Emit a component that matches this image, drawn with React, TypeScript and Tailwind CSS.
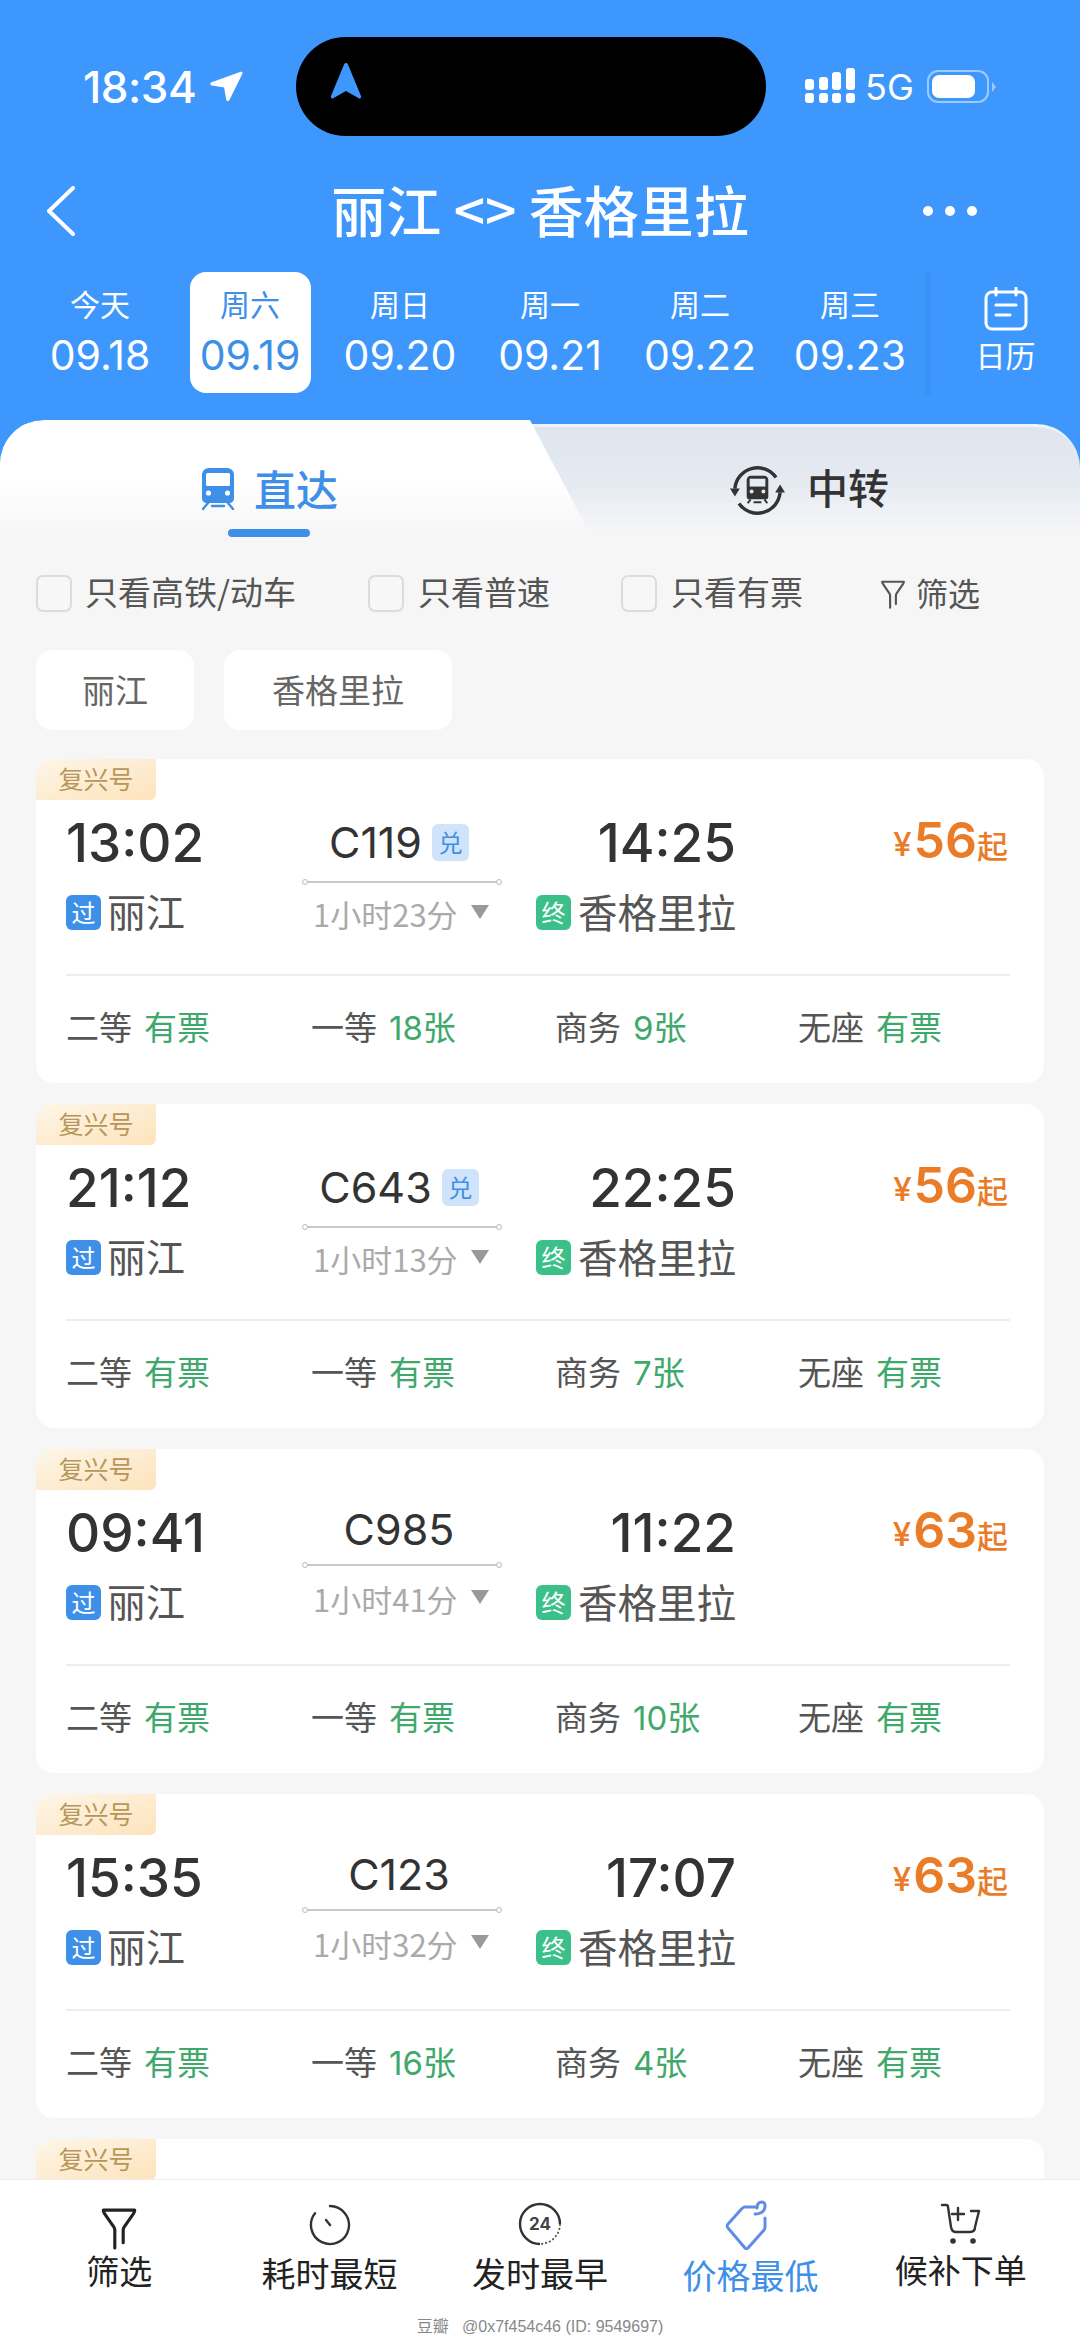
const cjk = 'font-["Noto_Sans_CJK_SC",sans-serif]'
const num = 'font-["Inter","Noto_Sans_CJK_SC",sans-serif]'

const dates = [
  { week: '今天', date: '09.18' },
  { week: '周六', date: '09.19', active: true },
  { week: '周日', date: '09.20' },
  { week: '周一', date: '09.21' },
  { week: '周二', date: '09.22' },
  { week: '周三', date: '09.23' },
]

const trains = [
  { dep: '13:02', no: 'C119', badge: true, arr: '14:25', dur: '1小时23分', price: '56', seats: ['有票', '18张', '9张', '有票'] },
  { dep: '21:12', no: 'C643', badge: true, arr: '22:25', dur: '1小时13分', price: '56', seats: ['有票', '有票', '7张', '有票'] },
  { dep: '09:41', no: 'C985', badge: false, arr: '11:22', dur: '1小时41分', price: '63', seats: ['有票', '有票', '10张', '有票'] },
  { dep: '15:35', no: 'C123', badge: false, arr: '17:07', dur: '1小时32分', price: '63', seats: ['有票', '16张', '4张', '有票'] },
]

const seatNames = ['二等', '一等', '商务', '无座']

function Funnel({ className }: { className: string }) {
  return (
    <svg viewBox="0 0 36 42" fill="none" stroke="currentColor" strokeWidth="3" strokeLinecap="round" strokeLinejoin="round" className={className}>
      <path d="M3 4h30M3 4c0 1 .5 2 1 3l9 13c.6.9 1 1.600 1 3v17M33 4c0 1-.5 2-1 3l-9 13c-.6.9-1 1.600-1 3v12" />
    </svg>
  )
}

function TrainGlyph({ className, fill, hole }: { className: string; fill: string; hole: string }) {
  return (
    <svg viewBox="0 0 36 42" className={className}>
      <path d="M9 0h18c4 0 7 3 7 7v23c0 3-2 5-5 5H7c-3 0-5-2-5-5V7c0-4 3-7 7-7z" fill={fill} />
      <rect x="6" y="5" width="24" height="13" rx="1.500" fill={hole} />
      <circle cx="8.500" cy="25" r="2.600" fill={hole} />
      <circle cx="27.500" cy="25" r="2.600" fill={hole} />
      <path d="M8 35l-5 6M28 35l5 6M12 38h12" stroke={fill} strokeWidth="2.400" strokeLinecap="round" fill="none" />
    </svg>
  )
}

function Tag() {
  return (
    <div className={`${cjk} w-[120px] h-[41px] rounded-br-[6px] bg-gradient-to-br from-[#fdf6e8] to-[#fde3bb] text-[#b8965a] text-[25px] leading-[38px] text-center`}>
      复兴号
    </div>
  )
}

function Card({ t }: { t: (typeof trains)[number] }) {
  return (
    <div className="bg-white rounded-[18px] h-[324px] overflow-hidden">
      <Tag />
      <div className="grid grid-cols-[236px_200px_234px_1fr] pl-[30px] pr-[36px]">
        <div className={`${num} h-[83px] pt-[10px] text-[53px] leading-[66px] font-medium text-[#333]`}>{t.dep}</div>
        <div className="h-[83px] flex flex-col">
          <div className="flex-1 flex items-center justify-center gap-[10px] pt-[4px] pr-[6px]">
            <span className={`${num} text-[43px] leading-none text-[#333]`}>{t.no}</span>
            {t.badge && (
              <span className={`${cjk} w-[37px] h-[37px] rounded-[6px] bg-[#cfe3fa] text-[#3d8fe8] text-[24px] leading-[35px] text-center`}>兑</span>
            )}
          </div>
          <div className={`relative h-[2px] bg-[#c9c9c9] mx-[2px] ${t.badge ? '' : 'mb-[7px]'}`}>
            <span className="absolute -left-[2px] -top-[2px] w-[6px] h-[6px] rounded-full border border-[#bbb] bg-white" />
            <span className="absolute -right-[2px] -top-[2px] w-[6px] h-[6px] rounded-full border border-[#bbb] bg-white" />
          </div>
        </div>
        <div className={`${num} h-[83px] pt-[10px] text-[53px] leading-[66px] font-medium text-[#333] text-right`}>{t.arr}</div>
        <div className="h-[83px] flex items-end justify-end text-[#ea7c28] pb-[21px]">
          <span className={`${num} text-[33px] leading-[36px] font-medium mr-[2px]`}>¥</span>
          <span className={`${num} text-[50px] leading-[54px] font-semibold -mb-[5px]`}>{t.price}</span>
          <span className={`${cjk} text-[31px] leading-[34px] font-medium`}>起</span>
        </div>

        <div className="h-[62px] flex items-center gap-[6px] pb-[3px]">
          <span className={`${cjk} w-[35px] h-[35px] rounded-[6px] bg-[#3d8fe8] text-white text-[24px] leading-[33px] text-center`}>过</span>
          <span className={`${cjk} text-[39px] leading-none text-[#555] -mt-[4px]`}>丽江</span>
        </div>
        <div className={`h-[62px] flex items-center pl-[11px] gap-[12px] ${t.badge ? 'pb-[2px]' : 'pb-[11px]'}`}>
          <span className={`${cjk} text-[31px] leading-none text-[#aaa] whitespace-nowrap`}>{t.dur}</span>
          <svg viewBox="0 0 20 15" className="w-[20px] h-[15px] -mt-[4px]">
            <path d="M1 1h18l-9 14z" fill="#999" />
          </svg>
        </div>
        <div className="h-[62px] flex items-center justify-end gap-[7px] pb-[3px]">
          <span className={`${cjk} w-[35px] h-[35px] rounded-[6px] bg-[#3cc08a] text-white text-[24px] leading-[33px] text-center`}>终</span>
          <span className={`${cjk} text-[39.500px] leading-none text-[#555] whitespace-nowrap -mt-[4px]`}>香格里拉</span>
        </div>
        <div />
      </div>
      <div className="h-[2px] bg-[#eeeeee] ml-[30px] mr-[34px] mt-[29px]" />
      <div className="grid grid-cols-[245px_244px_243px_1fr] pl-[30px] h-[108px] items-center pb-[3px]">
        {t.seats.map((s, i) => (
          <div key={i} className={`${num} text-[33px] leading-none flex gap-[12px] whitespace-nowrap`}>
            <span className="text-[#555]">{seatNames[i]}</span>
            <span className="text-[#3fa96b]">{s}</span>
          </div>
        ))}
      </div>
    </div>
  )
}

export default function App() {
  return (
    <div className={`relative w-[1080px] h-[2348px] overflow-hidden bg-[#f6f6f7] ${cjk}`}>
      {/* 顶部蓝色区域 */}
      <div className="bg-[#3d97fd] text-white h-[420px] pt-[37px]">
        <div className="h-[99px] flex items-center pl-[83px]">
          <span className="w-[112px] font-['Inter',sans-serif] font-medium text-[44px] leading-none whitespace-nowrap tracking-[-0.5px]">18:34</span>
          <svg viewBox="0 0 34 32" className="w-[33px] h-[31px] ml-[15px]">
            <path d="M31 1c2-.8 3 .4 2.300 2L20 30c-.8 1.800-3 1.500-3.300-.5L14.500 17 2 15c-2-.3-2.300-2.600-.4-3.400z" fill="#fff" />
          </svg>
          <div className="ml-[53px] w-[470px] h-[99px] rounded-[50px] bg-black flex items-center pl-[34px]">
            <svg viewBox="0 0 32 38" className="w-[32px] h-[38px] -mt-[12px]">
              <path d="M16 1c1 0 1.600.6 2 1.600L31 34c.6 1.600-.6 3-2.200 2.200L16 29 3.200 36.200C1.600 37 .4 35.600 1 34L14 2.600C14.400 1.600 15 1 16 1z" fill="#3d97fd" />
            </svg>
          </div>
          <div className="ml-[39px] grid grid-cols-4 gap-x-[4.500px] items-end w-[50px] -mt-[3px]">
            <span className="h-[11px] bg-white rounded-[3px]" />
            <span className="h-[13px] bg-white rounded-[3px]" />
            <span className="h-[18px] bg-white rounded-[3px]" />
            <span className="h-[22px] bg-white rounded-[3px]" />
            <span className="h-[10px] bg-white rounded-[3px] mt-[3px]" />
            <span className="h-[10px] bg-white rounded-[3px] mt-[3px]" />
            <span className="h-[10px] bg-white rounded-[3px] mt-[3px]" />
            <span className="h-[10px] bg-white rounded-[3px] mt-[3px]" />
          </div>
          <span className="ml-[10px] w-[49px] font-['Inter',sans-serif] text-[36px] leading-none">5G</span>
          <div className="ml-[13px] w-[62px] h-[33px] rounded-[11px] border-[2px] border-white/50 p-[3px] -mt-[1px]">
            <div className="w-[43px] h-full rounded-[7px] bg-white" />
          </div>
          <span className="ml-[3px] w-0 h-0 border-y-[5px] border-y-transparent border-l-[4px] border-l-white/50" />
        </div>

        <div className="h-[136px] pt-[8px] grid grid-cols-[1fr_auto_1fr] items-center">
          <div className="pl-[45px] pt-[6px]">
            <svg viewBox="0 0 30 50" fill="none" stroke="#fff" strokeWidth="4" strokeLinecap="round" strokeLinejoin="round" className="w-[30px] h-[50px]">
              <path d="M28 2L4 25l24 23" />
            </svg>
          </div>
          <div className="text-[55px] leading-none font-medium whitespace-nowrap">丽江 &lt;&gt; 香格里拉</div>
          <div className="flex justify-end gap-[12px] pr-[103px] pt-[6px]">
            <span className="w-[10px] h-[10px] rounded-full bg-white" />
            <span className="w-[10px] h-[10px] rounded-full bg-white" />
            <span className="w-[10px] h-[10px] rounded-full bg-white" />
          </div>
        </div>

        <div className="flex pl-[25px]">
          {dates.map((d) => (
            <div key={d.date} className="w-[150px] flex justify-center">
              <div className={`w-[121px] h-[121px] rounded-[16px] pt-[11px] flex flex-col items-center ${d.active ? 'bg-white text-[#3d8fe8]' : ''}`}>
                <span className="text-[30px] leading-[40px]">{d.week}</span>
                <span className={`${num} mt-[10px] text-[41px] leading-[44px] whitespace-nowrap`}>{d.date}</span>
              </div>
            </div>
          ))}
          <div className="flex-1 h-[125px] flex flex-col items-center pt-[15px] border-l-[6px] border-[#3b93f8]">
            <svg viewBox="0 0 44 44" fill="none" stroke="#fff" strokeWidth="3" strokeLinecap="round" className="w-[44px] h-[44px]">
              <rect x="2" y="5" width="40" height="37" rx="6" />
              <path d="M12 1v7M32 1v7M12 18h20M12 28h14" />
            </svg>
            <span className="mt-[3px] text-[30px] leading-[40px]">日历</span>
          </div>
        </div>
      </div>

      {/* 直达 / 中转 */}
      <div className="bg-[#3d97fd]">
        <div className="relative h-[125px] rounded-tr-[44px] rounded-tl-[44px] overflow-hidden flex">
          <div className="absolute inset-x-0 top-[4px] bottom-0 rounded-tr-[44px] border-t-[3px] border-[#eef3fa] bg-gradient-to-b from-[#dfe5ee] via-[#e6ebf2] via-50% to-[#f6f6f7] to-90%" />
          <div className="relative w-[596px] h-full rounded-tl-[44px] bg-gradient-to-b from-white from-50% to-[#f6f6f7] to-90% [clip-path:polygon(0_0,530px_0,596px_100%,0_100%)] flex flex-col items-center pt-[44px] pr-[58px]">
            <div className="flex items-center gap-[18px] h-[50px]">
              <TrainGlyph className="w-[36px] h-[42px]" fill="#3d8fe8" hole="#ffffff" />
              <span className="text-[42px] leading-none text-[#3d8fe8] font-medium -mt-[2px]">直达</span>
            </div>
            <span className="mt-[15px] w-[82px] h-[8px] rounded-full bg-[#3d8fe8]" />
          </div>
          <div className="relative flex-1 flex items-start pl-[134px] pt-[43px] gap-[22px]">
            <svg viewBox="0 0 56 56" fill="none" className="w-[55px] h-[55px]">
              <path d="M46.800 14.800A23 23 0 0 0 5 26M9.200 41.200A23 23 0 0 0 51 30" stroke="#333" strokeWidth="3.500" />
              <path d="M0 26h10l-5 8zM46 30h10l-5-8z" fill="#333" />
              <g transform="translate(17 13)">
                <path d="M4 0h14c2 0 4 2 4 4v17c0 2-1 3-3 3H3c-2 0-3-1-3-3V4c0-2 2-4 4-4z" fill="#333" />
                <rect x="3" y="3" width="16" height="8" fill="#e6eaf1" />
                <circle cx="5" cy="16" r="2" fill="#e6eaf1" />
                <circle cx="17" cy="16" r="2" fill="#e6eaf1" />
                <path d="M4 24l-3 4M18 24l3 4M7 27h8" stroke="#333" strokeWidth="2" />
              </g>
            </svg>
            <span className="text-[41px] leading-[46px] text-[#333] font-medium">中转</span>
          </div>
        </div>
      </div>

      {/* 筛选 */}
      <div className="flex items-center h-[37px] mt-[30px] pl-[36px] text-[33px] text-[#555]">
        <span className="w-[36px] h-[37px] rounded-[7px] border-2 border-[#dcdcdc] bg-[#f7f7f7]" />
        <span className="ml-[13px] w-[283px] leading-none whitespace-nowrap pb-[4px]">只看高铁/动车</span>
        <span className="w-[36px] h-[37px] rounded-[7px] border-2 border-[#dcdcdc] bg-[#f7f7f7]" />
        <span className="ml-[14px] w-[203px] leading-none whitespace-nowrap pb-[4px]">只看普速</span>
        <span className="w-[36px] h-[37px] rounded-[7px] border-2 border-[#dcdcdc] bg-[#f7f7f7]" />
        <span className="ml-[14px] w-[209px] leading-none whitespace-nowrap pb-[4px]">只看有票</span>
        <Funnel className="w-[26px] h-[32px]" />
        <span className="ml-[10px] text-[32px] leading-none pb-[4px]">筛选</span>
      </div>

      <div className="flex gap-[30px] pl-[36px] mt-[38px] text-[33px] text-[#666]">
        <div className="w-[158px] h-[80px] rounded-[16px] bg-white flex items-center justify-center">丽江</div>
        <div className="w-[228px] h-[80px] rounded-[16px] bg-white flex items-center justify-center">香格里拉</div>
      </div>

      {/* 车次列表 */}
      <div className="flex flex-col gap-[21px] mx-[36px] mt-[29px]">
        {trains.map((t) => (
          <Card key={t.no} t={t} />
        ))}
        <div className="bg-white rounded-[18px] h-[324px] overflow-hidden">
          <Tag />
        </div>
      </div>

      {/* 底部操作栏 */}
      <div className="absolute left-0 right-0 bottom-0 h-[169px] bg-white border-t border-[#ececec] px-[14px]">
        <div className="grid grid-cols-5 text-[#222]">
          <div className="flex flex-col items-center pt-[26px]">
            <Funnel className="w-[38px] h-[44px]" />
            <span className="text-[33px] leading-[40px]">筛选</span>
          </div>
          <div className="flex flex-col items-center pt-[24px]">
            <svg viewBox="0 0 42 42" fill="none" stroke="#333" strokeWidth="2.400" strokeLinecap="round" className="w-[42px] h-[42px]">
              <path d="M21 2a19 19 0 1 1-15 7.300" />
              <path d="M17 16l4 5" />
            </svg>
            <span className="text-[34px] leading-[42px] mt-[6px]">耗时最短</span>
          </div>
          <div className="flex flex-col items-center pt-[22px]">
            <svg viewBox="0 0 44 44" fill="none" className="w-[44px] h-[44px]">
              <path d="M42 22a20 20 0 0 1-20 20" stroke="#555" strokeWidth="1.800" strokeDasharray="2 2" />
              <path d="M22 42a20 20 0 0 1 0-40" stroke="#333" strokeWidth="2.400" />
              <path d="M22 2a20 20 0 0 1 20 20" stroke="#333" strokeWidth="2.400" />
              <text x="22" y="28" textAnchor="middle" fontSize="17" fontWeight="700" fontFamily="Inter, sans-serif" fill="#444">24</text>
            </svg>
            <span className="text-[34px] leading-[42px] mt-[6px]">发时最早</span>
          </div>
          <div className="flex flex-col items-center pt-[20px]">
            <svg viewBox="0 0 50 50" fill="none" stroke="#5d8de6" strokeWidth="3" strokeLinecap="round" strokeLinejoin="round" className="w-[50px] h-[50px]">
              <path d="M32 7H20c-1 0-2 .5-3 1.500L3 24c-1 1-1 3 0 4l17 20c1 1 2 1 3 0l16-18c1-1 1-2 1-3V18" />
              <path d="M30 14c3 0 7-1 9-4 2-4 1-8-2-8-4 0-5 3-5 6" />
            </svg>
            <span className="text-[34px] leading-[42px] mt-[4px] text-[#3d8fe8]">价格最低</span>
          </div>
          <div className="flex flex-col items-center pt-[23px]">
            <svg viewBox="0 0 42 42" fill="none" stroke="#333" strokeWidth="2.400" strokeLinecap="round" strokeLinejoin="round" className="w-[42px] h-[42px]">
              <path d="M2 2h4c1 0 2 1 2 2l3 20c.5 3 2 5 5 5h14c3 0 5-2 5-5l4-16h-8" />
              <path d="M18 5v12M12 11h12" />
              <circle cx="13" cy="38" r="1.600" fill="#333" />
              <circle cx="33" cy="38" r="1.600" fill="#333" />
            </svg>
            <span className="text-[33px] leading-[42px] mt-[3px]">候补下单</span>
          </div>
        </div>
        <div className="absolute left-0 right-0 top-[135px] text-center text-[16px] leading-[24px] text-[#888] font-['Liberation_Sans','Noto_Sans_CJK_SC',sans-serif] whitespace-pre">
          豆瓣   @0x7f454c46 (ID: 9549697)
        </div>
      </div>
    </div>
  )
}
